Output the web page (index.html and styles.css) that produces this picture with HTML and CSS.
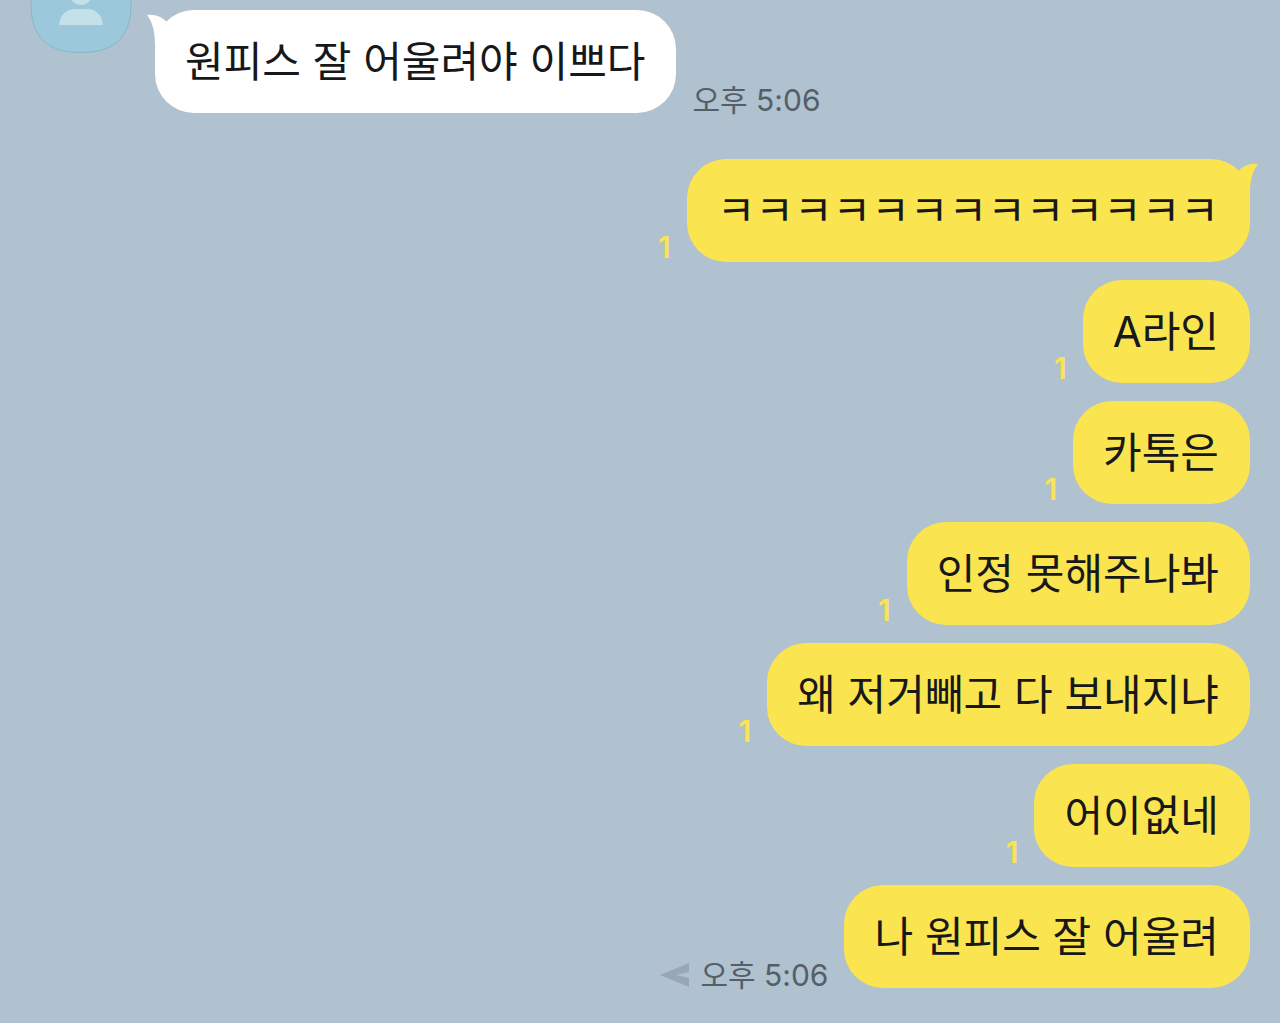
FILE: index.html
```html
<!DOCTYPE html>
<html lang="ko">
<head>
    <meta charset="UTF-8">
    <meta name="viewport" content="width=device-width, initial-scale=1.0">
    <title>채팅</title>
    <link rel="stylesheet" href="styles.css">
</head>
<body>

<main class="chat">
    <div class="message received">
        <svg class="avatar" viewBox="0 0 102 54" aria-hidden="true">
            <path class="avatar-bg" d="M1 -2V4C1 36 16 52.500 51 52.500S101 36 101 4V-2Z"/>
            <circle class="avatar-person" cx="51" cy="-6" r="11"/>
            <path class="avatar-person" d="M29 25C30 14 37 9 45 9H57C65 9 72 14 73 25Z"/>
        </svg>
        <div class="line">
            <div class="bubble">
                <svg class="tail" viewBox="0 0 26 32" aria-hidden="true">
                    <path d="M0 1C8 0 15 3 20 8L26 32H8C8 18 6 9 0 1Z"/>
                </svg>
                원피스 잘 어울려야 이쁘다
            </div>
            <time class="time">오후 5:06</time>
        </div>
    </div>

    <div class="sent">
        <div class="line">
            <span class="unread">1</span>
            <div class="bubble">
                <svg class="tail" viewBox="0 0 26 32" aria-hidden="true">
                    <path d="M26 1C18 0 11 3 6 8L0 32H18C18 18 20 9 26 1Z"/>
                </svg>
                ㅋㅋㅋㅋㅋㅋㅋㅋㅋㅋㅋㅋㅋ
            </div>
        </div>
        <div class="line">
            <span class="unread">1</span>
            <div class="bubble">A라인</div>
        </div>
        <div class="line">
            <span class="unread">1</span>
            <div class="bubble">카톡은</div>
        </div>
        <div class="line">
            <span class="unread">1</span>
            <div class="bubble">인정 못해주나봐</div>
        </div>
        <div class="line">
            <span class="unread">1</span>
            <div class="bubble">왜 저거빼고 다 보내지냐</div>
        </div>
        <div class="line">
            <span class="unread">1</span>
            <div class="bubble">어이없네</div>
        </div>
        <div class="line">
            <div class="status">
                <svg class="sending" viewBox="0 0 30 26" aria-hidden="true">
                    <path d="M0 13L29 1V10L16 13L29 16V25Z"/>
                </svg>
                <time class="time">오후 5:06</time>
            </div>
            <div class="bubble">나 원피스 잘 어울려</div>
        </div>
    </div>
</main>

</body>
</html>
```
FILE: styles.css
```css
body {
    margin: 0;
    background-color: #ffffff;
    font-family: Inter, "Noto Sans CJK KR", sans-serif;
    color: #17181a;
}
.chat {
    display: flex;
    flex-direction: column;
    gap: 46px;
    padding: 0 30px 35px;
    background-color: #b0c1d0;
}
.message {
    display: flex;
    align-items: flex-start;
    gap: 23px;
}
.avatar {
    width: 102px;
    height: 54px;
    flex-shrink: 0;
}
.avatar-bg {
    fill: #9bc8da;
    stroke: #88b5c7;
    stroke-width: 1;
}
.avatar-person {
    fill: #c4e0e9;
}
.received .line {
    padding-top: 10px;
}
.line {
    display: flex;
    align-items: flex-end;
    gap: 16px;
}
.bubble {
    position: relative;
    padding: 20px 31px 19px 30px;
    border-radius: 39px;
    font-size: 42px;
    line-height: 64px;
    background-color: #fae44f;
}
.received .bubble {
    background-color: #ffffff;
}
.tail {
    position: absolute;
    top: 4px;
    right: -8px;
    width: 26px;
    height: 32px;
    fill: #fae44f;
}
.received .tail {
    right: auto;
    left: -8px;
    fill: #ffffff;
}
.sent {
    display: flex;
    flex-direction: column;
    align-items: flex-end;
    gap: 18px;
}
.time {
    font-size: 30px;
    line-height: 26px;
    color: #555f67;
}
.unread {
    font-size: 30px;
    line-height: 30px;
    font-weight: 600;
    color: #fae44f;
}
.status {
    display: flex;
    align-items: center;
    gap: 10px;
}
.sending {
    width: 30px;
    height: 26px;
    fill: #98a6b5;
}
```
